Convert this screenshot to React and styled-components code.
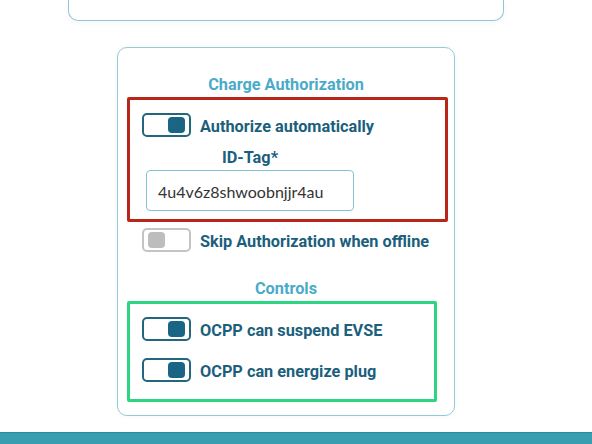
import React from 'react'
import styled, { createGlobalStyle } from 'styled-components'

const GlobalStyle = createGlobalStyle`
  html, body {
    margin: 0;
    padding: 0;
    background: #fff;
    font-family: Roboto, "Liberation Sans", sans-serif;
    overflow: hidden;
  }
  * { box-sizing: border-box; }
`

const Toggle = ({ on }) => (
  <Switch on={on}>
    <Knob on={on} />
  </Switch>
)

const SettingRow = ({ on, children }) => (
  <Row>
    <Toggle on={on} />
    <RowLabel>{children}</RowLabel>
  </Row>
)

export default function App () {
  return (
    <>
      <GlobalStyle />
      <Page>
        <TopCard />
        <Card>
          <SectionTitle>Charge Authorization</SectionTitle>
          <SettingRow on>Authorize automatically</SettingRow>
          <TagField>
            <FieldLabel>ID-Tag*</FieldLabel>
            <TagInput defaultValue='4u4v6z8shwoobnjjr4au' />
          </TagField>
          <SettingRow on={false}>Skip Authorization when offline</SettingRow>
          <SectionTitle spaced>Controls</SectionTitle>
          <SettingRow on>OCPP can suspend EVSE</SettingRow>
          <SettingRow on>OCPP can energize plug</SettingRow>

          <Highlight color='#b8261a' style={{ left: 9, top: 49, width: 321, height: 125 }} />
          <Highlight color='#2cd582' style={{ left: 9, top: 253, width: 310, height: 101 }} />
        </Card>
        <FooterBar />
      </Page>
    </>
  )
}

const Page = styled.div`
  width: 572px;
  height: 444px;
  display: flex;
  flex-direction: column;
  align-items: center;
`
const TopCard = styled.div`
  width: 436px;
  height: 21px;
  flex-shrink: 0;
  border: 1px solid #8fc6d4;
  border-top: none;
  border-radius: 0 0 10px 10px;
  box-shadow: 0 2px 6px rgba(0, 0, 0, 0.04);
`
const Card = styled.div`
  position: relative;
  width: 338px;
  margin-top: 26px;
  flex-shrink: 0;
  border: 1px solid #94cad8;
  border-radius: 10px;
  padding: 27px 0 33px 24px;
  display: flex;
  flex-direction: column;
  box-shadow: 0 0 6px rgba(0, 0, 0, 0.04);
`
const SectionTitle = styled.div`
  margin: ${p => (p.spaced ? '27px' : '0')} 0 0 -24px;
  height: 20px;
  line-height: 20px;
  text-align: center;
  color: #4aabc9;
  font-weight: 700;
  font-size: 16.3px;
`
const Row = styled.div`
  display: flex;
  align-items: center;
  gap: 9px;
  margin-top: 18px;
  & + & { margin-top: 17px; }
`
const RowLabel = styled.span`
  color: #1b5f7c;
  font-weight: 700;
  font-size: 16.3px;
  padding-top: 3px;
`
const Switch = styled.div`
  width: 49px;
  height: 24px;
  border: 2px solid ${p => (p.on ? '#23677f' : '#c4c4c4')};
  border-radius: 5px;
  display: flex;
  align-items: center;
  justify-content: ${p => (p.on ? 'flex-end' : 'flex-start')};
  padding: 0 4px;
`
const Knob = styled.div`
  width: 17px;
  height: 16px;
  border-radius: 4px;
  background: ${p => (p.on ? '#1a6584' : '#bdbdbd')};
`
const TagField = styled.div`
  width: 208px;
  margin: 11px 0 0 4px;
  display: flex;
  flex-direction: column;
  gap: 2px;
  & + ${Row} { margin-top: 17px; }
`
const FieldLabel = styled.div`
  height: 20px;
  line-height: 20px;
  text-align: center;
  color: #1b5f7c;
  font-weight: 700;
  font-size: 16.3px;
`
const TagInput = styled.input`
  width: 208px;
  height: 41px;
  border: 1px solid #84c4d4;
  border-radius: 4px;
  padding: 2px 11px 0;
  font-family: Lato, "Noto Sans", sans-serif;
  font-size: 16px;
  color: #333;
  outline: none;
`
const Highlight = styled.div`
  position: absolute;
  border: 3px solid ${p => p.color};
  border-radius: 2px;
  pointer-events: none;
`
const FooterBar = styled.div`
  width: 592px;
  align-self: flex-start;
  margin-top: 16px;
  height: 12px;
  background: #3a9eb1;
  border-top: 1px solid #2e8a9c;
`
